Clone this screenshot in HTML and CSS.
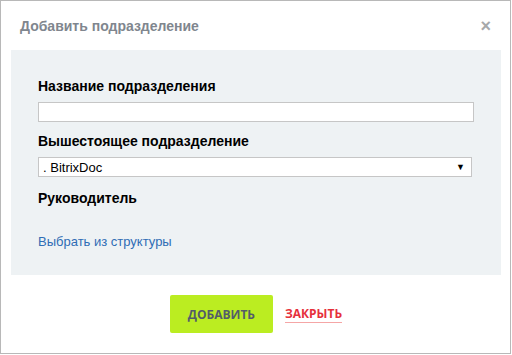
FILE: index.html
```html
<!DOCTYPE html>
<html lang="ru">
<head>
    <meta charset="UTF-8">
    <title>Добавить подразделение</title>
    <link rel="stylesheet" href="styles.css">
</head>
<body>
    <div class="dialog">
        <div class="dialog-head">
            <span class="dialog-title">Добавить подразделение</span>
            <span class="dialog-close">&times;</span>
        </div>
        <div class="dialog-content">
            <div class="field-label">Название подразделения</div>
            <input class="field-input" type="text">
            <div class="field-label">Вышестоящее подразделение</div>
            <div class="field-select">
                <span>. BitrixDoc</span>
                <span class="select-arrow">&#9660;</span>
            </div>
            <div class="field-label">Руководитель</div>
            <a class="struct-link" href="#">Выбрать из структуры</a>
        </div>
        <div class="dialog-buttons">
            <button class="btn-add">Добавить</button>
            <a class="btn-close" href="#">Закрыть</a>
        </div>
    </div>
</body>
</html>
```

FILE: styles.css
```css
body {
    margin: 0;
    font-family: "Liberation Sans", Arial, sans-serif;
    background: #fff;
}
.dialog {
    box-sizing: border-box;
    width: 511px;
    height: 354px;
    border: 1px solid #b8b8b8;
    background: #fff;
    display: flex;
    flex-direction: column;
}
.dialog-head {
    height: 49px;
    display: flex;
    align-items: center;
    justify-content: space-between;
    padding: 0 19px 0 19px;
}
.dialog-title {
    font-size: 14px;
    font-weight: bold;
    color: #80868e;
}
.dialog-close {
    font-size: 18px;
    font-weight: bold;
    color: #a7a9ab;
    line-height: 16px;
}
.dialog-content {
    margin: 0 9px 0 10px;
    height: 225px;
    box-sizing: border-box;
    background: #eef2f4;
    padding: 28px 27px 0 27px;
    display: flex;
    flex-direction: column;
    align-items: flex-start;
}
.field-label {
    font-size: 14px;
    line-height: 16px;
    font-weight: bold;
    color: #000;
    margin-bottom: 8px;
}
.field-input {
    box-sizing: border-box;
    width: 436px;
    height: 20px;
    margin: 0 0 11px 0;
    border: 1px solid #c6c6c6;
    background: #fff;
    padding: 0 4px;
}
.field-select {
    box-sizing: border-box;
    width: 434px;
    height: 20px;
    margin-bottom: 13px;
    border: 1px solid #c6c6c6;
    background: #fff;
    display: flex;
    align-items: center;
    justify-content: space-between;
    padding: 0 6px 0 4px;
    font-size: 13px;
    color: #000;
}
.select-arrow {
    font-size: 9px;
}
.struct-link {
    margin-top: 20px;
    font-size: 13px;
    line-height: 16px;
    color: #2f6db5;
    text-decoration: none;
}
.dialog-buttons {
    flex: 1;
    display: flex;
    align-items: center;
    justify-content: center;
    gap: 12px;
    padding-left: 1px;
}
.btn-add {
    width: 103px;
    height: 38px;
    border: none;
    border-radius: 2px;
    background: #bbed21;
    color: #535c69;
    font-family: "Open Sans", sans-serif;
    font-size: 12px;
    font-weight: bold;
    text-transform: uppercase;
}
.btn-close {
    font-family: "Open Sans", sans-serif;
    font-size: 12px;
    font-weight: bold;
    text-transform: uppercase;
    color: #e6303c;
    text-decoration: none;
    border-bottom: 1px solid #f5a6a6;
    line-height: 16px;
}
```
